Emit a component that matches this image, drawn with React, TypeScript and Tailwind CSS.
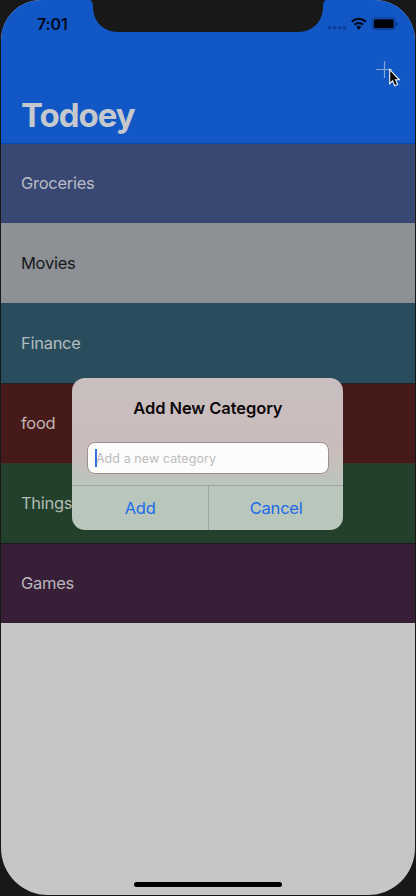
const categories = [
  { name: 'Groceries', style: 'h-[79px] pb-px bg-[#394773] text-[#b9bcc6]' },
  { name: 'Movies', style: 'h-20 bg-[#8d9095] text-[#17191b]' },
  { name: 'Finance', style: 'h-20 bg-[#2a4d5d] text-[#b3bcc0]' },
  { name: 'food', style: 'h-20 bg-[#461a18] text-[#c0b4b3] shadow-[inset_0_1px_0_#26222a]' },
  { name: 'Things', style: 'h-20 bg-[#23402b] text-[#b2bbb4] shadow-[inset_0_1px_0_#393a26]' },
  { name: 'Games', style: 'h-20 bg-[#361f37] text-[#bcb5bc] shadow-[inset_0_1px_0_#1b1a20]' },
];

function Notch() {
  return (
    <svg className="absolute top-0 left-[87px]" width="240" height="32" viewBox="0 0 240 32">
      <path
        d="M3 0C5 1 6 3 6 7C6 21 16 32 31 32H211C226 32 236 21 236 7C236 3 236.5 1 239 0Z"
        fill="#181818"
      />
    </svg>
  );
}

function StatusIcons() {
  return (
    <svg className="absolute top-[14px] left-[325px]" width="76" height="20" viewBox="0 0 76 20">
      <g fill="#0c419b">
        <rect x="3" y="12" width="3.5" height="3.5" rx="1" />
        <rect x="8" y="12" width="3.5" height="3.5" rx="1" />
        <rect x="13" y="12" width="3.5" height="3.5" rx="1" />
        <rect x="17.7" y="12" width="3.5" height="3.5" rx="1" />
      </g>
      <g fill="none" stroke="#03091b" strokeWidth="2.2">
        <path d="M26.8 7.7A10.2 10.2 0 0 1 40.8 7.7" />
        <path d="M29.4 10.8A6.4 6.4 0 0 1 38.2 10.8" />
      </g>
      <path d="M31.2 13.1A3.7 3.7 0 0 1 36.4 13.1L33.8 15.8Z" fill="#03091b" />
      <rect x="47" y="3.8" width="23.5" height="11.8" rx="3.2" fill="none" stroke="#0c3c92" />
      <rect x="48.8" y="5.2" width="20" height="9" rx="1.6" fill="#010208" />
      <path d="M71.4 8V12C73.4 11.3 73.4 8.7 71.4 8Z" fill="#0a2f78" />
    </svg>
  );
}

function AddAndPointer() {
  return (
    <svg className="absolute top-[58px] left-[372px]" width="32" height="32" viewBox="0 0 32 32">
      <path d="M4 11.5H20M12.5 3V20" stroke="#82a8da" strokeWidth="1.2" fill="none" />
      <path
        d="M17.7 11.6V25.6L20.6 22.8L22.7 27.7L25.6 26.5L23.6 21.8H27.4Z"
        fill="#060606"
        stroke="#f2f2f2"
        strokeWidth="1.1"
      />
    </svg>
  );
}

function CategoryDialog() {
  return (
    <div className="absolute top-[378px] left-[72.4px] flex h-[152px] w-[271px] flex-col overflow-hidden rounded-[13px] bg-linear-to-b from-[#c9bfc0] via-[#cabcbc] via-45% to-[#b9c6bc] to-75%">
      <div className="flex h-[108px] flex-col items-center border-b border-[#9da5a0]">
        <h2 className="mt-[18px] text-[16.5px] leading-6 font-semibold tracking-[-0.08px] text-[#0c0809]">Add New Category</h2>
        <div className="mt-[22px] flex h-8 w-[242px] items-center rounded-[8px] border border-[#a08f8d] bg-[#fcfcfc] pl-[7px]">
          <span className="h-[18px] w-[2px] shrink-0 bg-[#2f6fe0]" />
          <span className="-ml-[1px] pt-[2px] text-[12.5px] tracking-[0.08px] text-[#bcbcbc]">Add a new category</span>
        </div>
      </div>
      <div className="flex flex-1 text-[16.5px] tracking-[-0.2px] text-[#1b6be8]">
        <button className="flex w-[136.5px] items-center justify-center border-r border-[#9da5a6] pt-px">Add</button>
        <button className="flex flex-1 items-center justify-center pt-px">Cancel</button>
      </div>
    </div>
  );
}

export default function App() {
  return (
    <div className="relative h-[896px] w-[416px] overflow-hidden bg-[#181818] px-px pb-px font-[Inter,sans-serif]">
      <div className="flex h-full flex-col overflow-hidden rounded-t-[40px] rounded-b-[47px] bg-[#c6c6c6]">
        <header className="flex h-[144px] flex-col border-b border-[#0b47ab] bg-[#1257c6]">
          <div className="mt-[14px] ml-9 text-[16px] leading-5 font-semibold tracking-[-0.1px] text-[#03091b]">7:01</div>
          <h1 className="mt-[61px] ml-5 text-[33px] leading-10 font-bold tracking-[-1px] text-[#c5c8cc]">Todoey</h1>
        </header>
        <ul>
          {categories.map((category) => (
            <li key={category.name} className={`flex items-center pl-5 text-[16.5px] tracking-[-0.28px] ${category.style}`}>
              {category.name}
            </li>
          ))}
        </ul>
      </div>
      <Notch />
      <StatusIcons />
      <AddAndPointer />
      <CategoryDialog />
      <div className="absolute bottom-[9px] left-[134px] h-[5px] w-[148px] rounded-full bg-black" />
    </div>
  );
}
